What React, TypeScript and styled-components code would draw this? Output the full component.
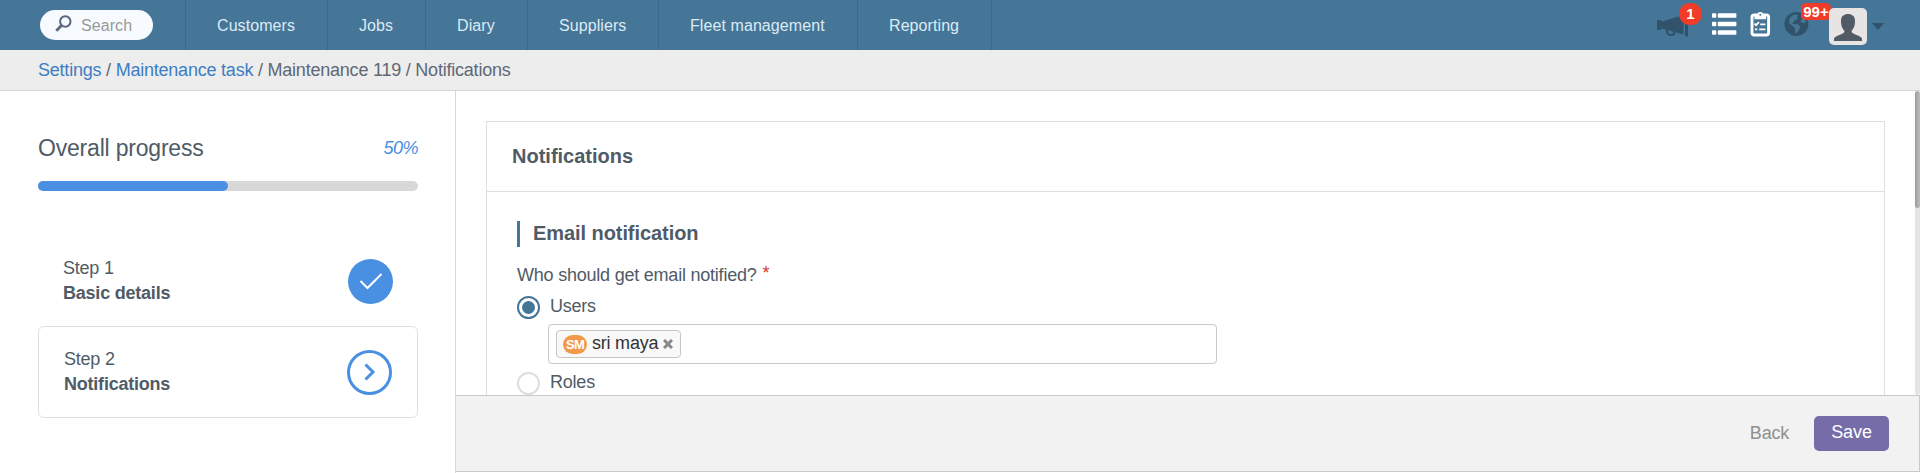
import React from 'react';
import styled, { createGlobalStyle } from 'styled-components';

const Global = createGlobalStyle`
  * { box-sizing: border-box; }
  html, body, #root { height: 100%; margin: 0; }
  body { font-family: "Liberation Sans", Arial, sans-serif; font-size: 18px; letter-spacing: -0.22px; color: #4f5b66; background: #fff; overflow: hidden; }
`;
const Page = styled.div`display: flex; flex-direction: column; height: 473px; width: 1920px;`;
const Header = styled.header`display: flex; height: 50px; background: #457597; flex: none; letter-spacing: 0.08px;`;
const SearchArea = styled.div`width: 185px; padding: 10px 0 0 40px;`;
const SearchPill = styled.div`
  display: flex; align-items: center; width: 113px; height: 30px; border-radius: 15px;
  background: #f7faff; padding-left: 15px; gap: 9px; font-size: 16px; color: #97999c; line-height: 32px;
  svg { margin-top: -3px; }
  span { padding-top: 2px; }
`;
const Nav = styled.nav`display: flex; border-right: 1px solid #3c678a;`;
const NavItem = styled.a<{ $w: number }>`
  width: ${p => p.$w}px; border-left: 1px solid #3c678a; padding-left: 31px;
  color: #dcebf5; font-size: 16px; line-height: 52px; height: 50px; white-space: nowrap;
`;
const Tools = styled.div`display: flex; margin-left: auto; width: 263px; height: 50px;`;
const Tool = styled.div<{ $w: number; $top: number }>`
  position: relative; width: ${p => p.$w}px; padding-top: ${p => p.$top}px; flex: none;
  svg { display: block; }
`;
const Badge = styled.span<{ $x: number; $y: number; $w: number; $h: number; $r: number }>`
  position: absolute; left: ${p => p.$x}px; top: ${p => p.$y}px; width: ${p => p.$w}px; height: ${p => p.$h}px;
  border-radius: ${p => p.$r}px; background: #f03c28; color: #fff; font-weight: bold; font-size: 15px;
  line-height: ${p => p.$h}px; text-align: center; letter-spacing: 0;
`;
const Avatar = styled.div`
  width: 38px; height: 37px; border-radius: 5px; background: #e8e4e3; overflow: hidden; position: relative;
`;
const Crumbs = styled.div`
  flex: none; height: 41px; background: #ededed; border-bottom: 1px solid #d1d8d8;
  padding-left: 38px; line-height: 40px; color: #5f6875; white-space: pre;
  a { color: #3d7dc4; }
`;
const Body = styled.div`display: flex; flex: 1; min-height: 0;`;
const Sidebar = styled.aside`width: 456px; border-right: 1px solid #d6d6d6; padding: 43px 37px 0 38px; flex: none;`;
const ProgressHead = styled.div`
  display: flex; justify-content: space-between; align-items: center; height: 28px; font-size: 23px; letter-spacing: -0.2px;
  em { font-size: 18px; color: #4990e2; letter-spacing: -0.5px; }
`;
const Track = styled.div`margin-top: 19px; height: 10px; border-radius: 5px; background: #d8d8d8;`;
const Fill = styled.div`height: 10px; border-radius: 5px; background: #4990e2;`;
const Steps = styled.div`margin-top: 45px;`;
const Step = styled.div<{ $active?: boolean }>`
  display: flex; justify-content: space-between; align-items: center;
  height: ${p => (p.$active ? 92 : 90)}px; border-radius: 6px;
  border: ${p => (p.$active ? '1px solid #dfdfdf' : '0')}; padding: 0 25px;
`;
const StepText = styled.div`line-height: 25px; b { display: block; }`;
const Circle = styled.div<{ $done?: boolean }>`
  width: 45px; height: 45px; border-radius: 50%; display: flex; align-items: center; justify-content: center;
  background: ${p => (p.$done ? '#4990e2' : '#fff')}; border: ${p => (p.$done ? '0' : '3px solid #4990e2')};
`;
const Main = styled.main`display: flex; flex-direction: column; flex: 1; min-width: 0;`;
const Scroller = styled.div`display: flex; flex: none; height: 304px; overflow: hidden;`;
const Scrollbar = styled.div`margin-left: auto; width: 5px; height: 304px; background: #e4e4e4; border-radius: 3px;`;
const Thumb = styled.div`width: 5px; height: 117px; border-radius: 3px; background: linear-gradient(90deg, #9c9c9c, #bdbdbd);`;
const Card = styled.section`margin: 30px 0 0 30px; width: 1399px; height: 400px; border: 1px solid #dfdfdf; flex: none;`;
const CardTitle = styled.h2`
  margin: 0; height: 70px; border-bottom: 1px solid #dfdfdf; padding-left: 25px;
  font-size: 20px; line-height: 68px; letter-spacing: 0;
`;
const CardBody = styled.div`padding: 29px 30px 0;`;
const SectionTitle = styled.h3`
  margin: 0; height: 26px; border-left: 3px solid #457597; padding-left: 13px; font-size: 20px; line-height: 25px; letter-spacing: -0.07px;
`;
const Question = styled.div`
  display: flex; gap: 6px; height: 24px; margin-top: 16px; line-height: 25px;
  span { color: #d93535; line-height: 21px; }
`;
const Option = styled.label<{ $top: number }>`display: flex; gap: 10px; height: 23px; margin-top: ${p => p.$top}px; line-height: 20px;`;
const Radio = styled.i<{ $on?: boolean }>`
  width: 23px; height: 23px; border-radius: 50%; display: flex; align-items: center; justify-content: center;
  border: 2px solid ${p => (p.$on ? '#457597' : '#dedede')};
  &::after { content: ''; width: 13px; height: 13px; border-radius: 50%; background: ${p => (p.$on ? '#457597' : 'transparent')}; }
`;
const UserField = styled.div`
  display: flex; margin: 5px 0 0 31px; width: 669px; height: 40px; padding: 5px 7px;
  border: 1px solid #c9c9c9; border-radius: 4px;
`;
const Chip = styled.div`
  display: flex; align-items: center; height: 28px; width: 125px; padding-left: 6px; line-height: 24px;
  border: 1px solid #c6c6c6; border-radius: 4px; background: #f8f8f8; color: #333;
  svg { margin-left: 5px; }
`;
const ChipName = styled.span`margin-top: -2px;`;
const Initials = styled.span`
  width: 24px; height: 19px; margin-right: 5px; border-radius: 10px; background: #f2994a; color: #fff;
  font-size: 13px; font-weight: bold; line-height: 19px; letter-spacing: -0.8px; text-align: center;
`;
const Footer = styled.footer`
  display: flex; align-items: center; justify-content: flex-end; height: 77px; flex: none;
  background: #f2f2f2; border: 1px solid #c9c9c9; border-left: 0; padding-right: 30px; gap: 25px; color: #8f8f8f;
`;
const Save = styled.button`
  width: 75px; height: 35px; border: 0; border-radius: 5px; background: #756ca8; color: #fff;
  font: 18px "Liberation Sans", Arial, sans-serif; padding: 0 0 2px; letter-spacing: -0.1px;
`;

const navItems: [string, number][] = [
  ['Customers', 142], ['Jobs', 98], ['Diary', 102], ['Suppliers', 131], ['Fleet management', 199], ['Reporting', 134],
];

export default function App() {
  return (
    <Page>
      <Global />
      <Header>
        <SearchArea>
          <SearchPill>
            <svg width="17" height="17" viewBox="0 0 17 17" fill="none" stroke="#59677d">
              <circle cx="10.3" cy="6.5" r="5.2" strokeWidth="2" />
              <path d="M6.5 10.5L1.3 15.7" strokeWidth="2.8" />
            </svg>
            <span>Search</span>
          </SearchPill>
        </SearchArea>
        <Nav>{navItems.map(([t, w]) => <NavItem key={t} $w={w}>{t}</NavItem>)}</Nav>
        <Tools>
          <Tool $w={54} $top={14}>
            <svg width="33" height="24" viewBox="0 0 33 24" fill="#30536b">
              <path d="M0 6H3.5L5 7.5L26.5 1V20.5L5 14.5L3.5 16H0Z" />
              <rect x="28" y="2" width="3" height="20.5" />
              <path d="M9.7 15.5C9.7 19.5 11.5 21 13.8 21S17.6 19.5 17.6 17.5" fill="none" stroke="#30536b" strokeWidth="2.2" />
            </svg>
            <Badge $x={22} $y={3} $w={23} $h={22} $r={12}>1</Badge>
          </Tool>
          <Tool $w={39} $top={13}>
            <svg width="26" height="22" viewBox="0 0 26 22" fill="#fff">
              {[0.3, 8.8, 17.3].map(y => <g key={y}><rect x="1" y={y} width="4.3" height="4.4" rx="0.8" /><rect x="6.8" y={y} width="18.6" height="4.4" rx="0.8" /></g>)}
            </svg>
          </Tool>
          <Tool $w={34} $top={11}>
            <svg width="21" height="26" viewBox="0 0 21 26" fill="none" stroke="#fff">
              <rect x="2" y="4" width="16.6" height="20" rx="2.2" strokeWidth="2.9" />
              <path d="M4.5 8.3V3.5H7.1A3.3 3.3 0 0 1 13.5 3.5H16.1V8.3Z" fill="#fff" stroke="none" />
              <circle cx="10.3" cy="3.8" r="1" fill="#457597" stroke="none" />
              <path d="M4.5 12.7L6 14.2L9 11.2M10.2 13.4H15.4M5 18.4H7.3M9.2 18.4H15.4" strokeWidth="1.8" />
            </svg>
          </Tool>
          <Tool $w={45} $top={12}>
            <svg width="25" height="25" viewBox="0 0 25 25">
              <circle cx="12.4" cy="12" r="12" fill="#30536b" />
              <path d="M5.2 7C6.5 4 9 2.5 12 2.4L14.5 3.5L12.8 5.2L14.2 6.6L10.6 8.3L9.4 10.6L7.8 11.2L9.8 12.2L12.6 11.8L16.4 14.6L14.8 18L12.4 21.6L11.2 20.8L11 16.6L8.8 14L5.2 11.4ZM16.6 3.4C19.5 4.6 21.4 7 22 10L19.2 11.2L16.6 9.4L17.8 6.8Z" fill="#457597" />
            </svg>
            <Badge $x={17} $y={3} $w={30} $h={17} $r={5}>99+</Badge>
          </Tool>
          <Tool $w={43} $top={8}>
            <Avatar>
              <svg width="38" height="37" viewBox="0 0 38 37">
                <path d="M5 33V30.5C7 26.5 15.5 27 15.5 23C12.8 20 12 17 12 13C12 8 15 6 19 6S26 8 26 13C26 17 25.2 20 22.5 23C22.5 27 31 26.5 33 30.5V33Z" fill="#505b66" />
              </svg>
            </Avatar>
          </Tool>
          <Tool $w={18} $top={23}>
            <svg width="12" height="7" viewBox="0 0 12 7"><path d="M0 0H12L6 7Z" fill="#30536b" /></svg>
          </Tool>
        </Tools>
      </Header>
      <Crumbs><a>Settings</a> / <a>Maintenance task</a> / Maintenance 119 / Notifications</Crumbs>
      <Body>
        <Sidebar>
          <ProgressHead>Overall progress<em>50%</em></ProgressHead>
          <Track><Fill style={{ width: '50%' }} /></Track>
          <Steps>
            <Step>
              <StepText>Step 1<b>Basic details</b></StepText>
              <Circle $done>
                <svg width="24" height="18" viewBox="0 0 24 18" fill="none" stroke="#fff" strokeWidth="2"><path d="M1.5 9L8.5 16L22.5 2" /></svg>
              </Circle>
            </Step>
            <Step $active>
              <StepText>Step 2<b>Notifications</b></StepText>
              <Circle>
                <svg width="12" height="18" viewBox="0 0 12 18" fill="none" stroke="#4990e2" strokeWidth="3"><path d="M1.5 1.5L9 9L1.5 16.5" /></svg>
              </Circle>
            </Step>
          </Steps>
        </Sidebar>
        <Main>
          <Scroller>
            <Card>
              <CardTitle>Notifications</CardTitle>
              <CardBody>
                <SectionTitle>Email notification</SectionTitle>
                <Question>Who should get email notified? <span>*</span></Question>
                <Option $top={9}><Radio $on />Users</Option>
                <UserField>
                  <Chip>
                    <Initials>SM</Initials><ChipName>sri maya</ChipName>
                    <svg width="10" height="10" viewBox="0 0 10 10" stroke="#888" strokeWidth="3"><path d="M1 1L9 9M9 1L1 9" /></svg>
                  </Chip>
                </UserField>
                <Option $top={8}><Radio />Roles</Option>
              </CardBody>
            </Card>
            <Scrollbar><Thumb /></Scrollbar>
          </Scroller>
          <Footer><span>Back</span><Save>Save</Save></Footer>
        </Main>
      </Body>
    </Page>
  );
}
